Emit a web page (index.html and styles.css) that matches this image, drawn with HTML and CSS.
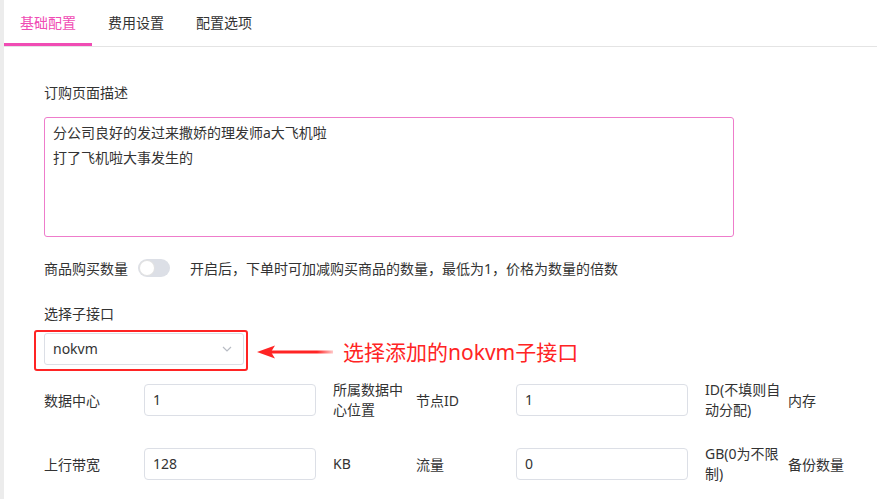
FILE: index.html
```html
<!DOCTYPE html>
<html lang="zh-CN">
<head>
<meta charset="utf-8">
<title>基础配置</title>
<link rel="stylesheet" href="styles.css">
</head>
<body>
<div class="page">
  <div class="edge"></div>
  <div class="main">
    <nav class="tabs">
      <div class="tab active">基础配置</div>
      <div class="tab">费用设置</div>
      <div class="tab">配置选项</div>
    </nav>
    <div class="content">
      <div class="label">订购页面描述</div>
      <textarea class="desc">分公司良好的发过来撒娇的理发师a大飞机啦
打了飞机啦大事发生的</textarea>

      <div class="switch-row">
        <span class="switch-label">商品购买数量</span>
        <span class="switch"><span class="knob"></span></span>
        <span class="hint">开启后，下单时可加减购买商品的数量，最低为1，价格为数量的倍数</span>
      </div>

      <div class="label label-sub">选择子接口</div>
      <div class="select-row">
        <div class="select">
          <span>nokvm</span>
          <svg class="chev" width="10" height="6" viewBox="0 0 10 6"><path d="M1 1 L5 5 L9 1" fill="none" stroke="#b8bcc4" stroke-width="1.2"/></svg>
        </div>
        <div class="redbox"></div>
        <svg class="arrow" width="76" height="16" viewBox="0 0 76 16">
          <defs>
            <linearGradient id="fade" x1="0" x2="1" y1="0" y2="0">
              <stop offset="0" stop-color="#ff2424"/>
              <stop offset="0.75" stop-color="#ff2424"/>
              <stop offset="1" stop-color="#ff2424" stop-opacity="0.25"/>
            </linearGradient>
          </defs>
          <rect x="12" y="6.5" width="64" height="3" fill="url(#fade)"/>
          <path d="M0 8 L18 1.5 L14 8 L18 14.5 Z" fill="#ff2424"/>
        </svg>
        <span class="note">选择添加的nokvm子接口</span>
      </div>

      <div class="fields">
        <div class="field-row">
          <div class="group">
            <span class="f-label">数据中心</span>
            <div class="input">1</div>
            <span class="unit">所属数据中心位置</span>
          </div>
          <div class="group">
            <span class="f-label">节点ID</span>
            <div class="input">1</div>
            <span class="unit">ID(不填则自动分配)</span>
          </div>
          <div class="group">
            <span class="f-label">内存</span>
            <div class="input"></div>
          </div>
        </div>
        <div class="field-row">
          <div class="group">
            <span class="f-label">上行带宽</span>
            <div class="input">128</div>
            <span class="unit">KB</span>
          </div>
          <div class="group">
            <span class="f-label">流量</span>
            <div class="input">0</div>
            <span class="unit">GB(0为不限制)</span>
          </div>
          <div class="group">
            <span class="f-label">备份数量</span>
            <div class="input"></div>
          </div>
        </div>
      </div>
    </div>
  </div>
</div>
</body>
</html>
```
FILE: styles.css
```css
* { box-sizing: border-box; }
html, body {
  margin: 0;
  padding: 0;
  background: #fff;
}
body {
  font-family: "Noto Sans", "Noto Sans CJK SC", sans-serif;
  font-size: 14px;
  color: #333;
  width: 877px;
  height: 499px;
  overflow: hidden;
}
.page {
  display: flex;
  height: 499px;
}
.edge {
  width: 4px;
  flex: none;
  background: #ececec;
}
.main {
  flex: 1;
  min-width: 0;
  overflow: hidden;
}
.tabs {
  display: flex;
  height: 47px;
  border-bottom: 1px solid #e4e4e4;
}
.tab {
  padding: 0 16px;
  height: 46px;
  line-height: 46px;
  border-bottom: 3px solid transparent;
  color: #333;
}
.tab.active {
  color: #f04cb4;
  border-bottom-color: #f04cb4;
}
.content {
  padding: 36px 0 0 40px;
}
.label {
  line-height: 20px;
  height: 20px;
}
.desc {
  display: block;
  margin: 14px 0 0;
  width: 690px;
  height: 120px;
  border: 1px solid #ee7ccb;
  border-radius: 3px;
  padding: 2px 8px;
  font: inherit;
  line-height: 25px;
  color: #333;
  resize: none;
  overflow: hidden;
  outline: none;
}
.switch-row {
  display: flex;
  align-items: center;
  height: 20px;
  margin-top: 21px;
}
.switch {
  width: 32px;
  height: 18px;
  border-radius: 9px;
  background: #dcdfe6;
  margin-left: 10px;
  display: flex;
  align-items: center;
  padding-left: 2px;
}
.knob {
  width: 14px;
  height: 14px;
  border-radius: 50%;
  background: #fff;
  box-shadow: 0 0 0 1px #e2e2e2;
}
.hint {
  margin-left: 20px;
}
.label-sub {
  margin-top: 26px;
}
.select-row {
  position: relative;
  display: flex;
  align-items: center;
  height: 32px;
  margin-top: 9px;
}
.select {
  width: 200px;
  height: 32px;
  border: 1px solid #dcdfe6;
  border-radius: 3px;
  padding: 0 12px 0 8px;
  display: flex;
  align-items: center;
  justify-content: space-between;
}
.select span {
  margin-top: -2px;
}
.chev {
  margin-right: -1px;
}
.redbox {
  position: absolute;
  left: -10px;
  top: -3px;
  width: 214px;
  height: 41px;
  border: 2.5px solid #ff2424;
  border-radius: 3px;
}
.arrow {
  margin-left: 13px;
  margin-top: 6px;
  flex: none;
}
.note {
  margin-left: 10px;
  margin-top: 6px;
  font-size: 21px;
  line-height: 26px;
  color: #ff2424;
  white-space: nowrap;
}
.fields {
  margin-top: 15px;
  display: flex;
  flex-direction: column;
  gap: 24px;
}
.field-row {
  display: flex;
  height: 40px;
  align-items: center;
  white-space: nowrap;
}
.group {
  display: flex;
  align-items: center;
  flex: none;
}
.f-label {
  width: 100px;
  flex: none;
}
.input {
  width: 172px;
  height: 32px;
  flex: none;
  border: 1px solid #dcdfe6;
  border-radius: 4px;
  padding: 0 8px;
  line-height: 30px;
}
.unit {
  width: 100px;
  flex: none;
  padding: 0 6px 0 17px;
  line-height: 20px;
  white-space: normal;
}
```
